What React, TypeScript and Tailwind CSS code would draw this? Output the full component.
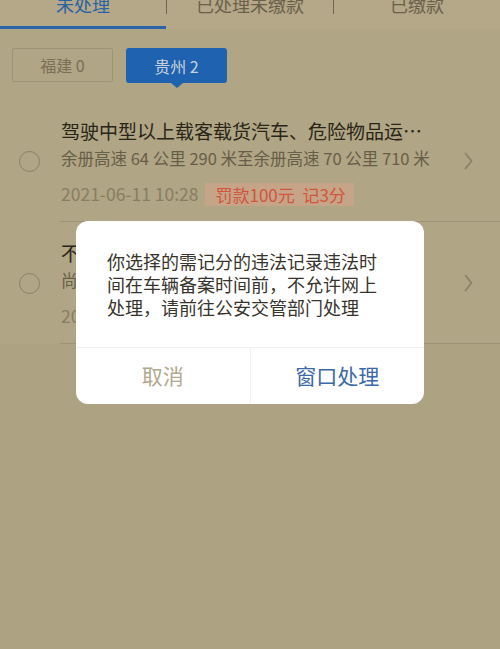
import React from 'react';

const FONT = { fontFamily: '"Noto Sans CJK SC", "Noto Sans", sans-serif' };

interface Record {
  title: string;
  place: string;
  time: string;
  penalty: string;
}

const records: Record[] = [
  {
    title: '驾驶中型以上载客载货汽车、危险物品运…',
    place: '余册高速 64 公里 290 米至余册高速 70 公里 710 米',
    time: '2021-06-11 10:28',
    penalty: '罚款100元  记3分',
  },
  {
    title: '不按规定使用灯光的',
    place: '尚义路与余册高速连接线路口',
    time: '2021-06-09 08:42',
    penalty: '罚款100元  记1分',
  },
];

const Tabs: React.FC = () => {
  const tabs = ['未处理', '已处理未缴款', '已缴款'];
  return (
    <div className="flex -mt-[8px] bg-[#B4A888]">
      {tabs.map((t, i) => (
        <React.Fragment key={t}>
          {i > 0 && <div className="w-px h-[22px] bg-[#6f6650] self-start" />}
          <div className="w-[166px] flex flex-col items-center">
            <div
              className={`h-[24px] leading-[24px] text-[18px] ${
                i === 0 ? 'text-[#2b62a3]' : 'text-[#6a614b]'
              }`}
            >
              {t}
            </div>
            <div className="h-[10px]" />
            <div className={`h-[3px] w-full ${i === 0 ? 'bg-[#2a63a8]' : 'bg-transparent'}`} />
          </div>
        </React.Fragment>
      ))}
    </div>
  );
};

const RecordRow: React.FC<{ r: Record }> = ({ r }) => (
  <div className="flex">
    {/* radio */}
    <div className="w-[60px] flex items-center pl-[19px]">
      <div className="w-[21px] h-[21px] rounded-full border-[1.5px] border-[#8a8068]" />
    </div>
    <div className="flex-1 flex border-b border-[#9c9276]">
      <div className="flex-1 min-w-0 pl-px pt-[17px] pb-[15px]">
        <div className="text-[19px] leading-[28px] text-[#2a2518] whitespace-nowrap overflow-hidden">
          {r.title}
        </div>
        <div className="text-[16.5px] leading-[26px] text-[#675e48] whitespace-nowrap overflow-hidden">
          {r.place}
        </div>
        <div className="flex items-center mt-[12px] h-[23px]">
          <span className="text-[17.5px] text-[#877d63] whitespace-nowrap">{r.time}</span>
          <span className="ml-[7px] h-[23px] flex items-center pl-[10px] pr-[8px] bg-[#C6A487] text-[#D2553D] text-[17px] whitespace-pre">
            {r.penalty}
          </span>
        </div>
      </div>
      <div className="w-[63px] flex items-center pl-[27px]">
        <svg width="9" height="18" viewBox="0 0 9 18" fill="none">
          <path d="M1.5 1.5 L7.5 9 L1.5 16.5" stroke="#8b8168" strokeWidth="1.8" strokeLinecap="round" strokeLinejoin="round" />
        </svg>
      </div>
    </div>
  </div>
);

export default function App() {
  return (
    <div className="relative w-[500px] h-[649px] overflow-hidden bg-[#ADA282]" style={FONT}>
      <div className="bg-[#B0A585]">
        <Tabs />

        {/* province chips */}
        <div className="flex gap-[13px] pl-[12px] mt-[19px]">
          <div className="w-[101px] h-[34px] flex items-center justify-center border border-[#9d9376] rounded-[2px] text-[16px] text-[#7a7057]">
            福建 0
          </div>
          <div className="relative w-[101px] h-[35px] flex items-center justify-center bg-[#1F63B0] rounded-[3px] text-[16px] text-[#C8D2DE]">
            贵州 2
            <div className="absolute left-1/2 -translate-x-1/2 top-full w-0 h-0 border-l-[6px] border-r-[6px] border-t-[5px] border-l-transparent border-r-transparent border-t-[#1F63B0]" />
          </div>
        </div>

        <div className="mt-[17px]">
          {records.map((r) => (
            <RecordRow key={r.time} r={r} />
          ))}
        </div>
      </div>

      {/* dialog */}
      <div className="absolute left-[76px] top-[221px] w-[348px] bg-white rounded-[12px] overflow-hidden">
        <div className="pl-[31px] pr-[31px] pt-[29px] pb-[28px] text-[18px] leading-[23px] text-[#38342c]">
          你选择的需记分的违法记录违法时间在车辆备案时间前，不允许网上处理，请前往公安交管部门处理
        </div>
        <div className="flex h-[57px] border-t border-[#f1f1f1]">
          <button type="button" className="flex-1 flex items-center justify-center text-[21px] text-[#B2A88D]">
            取消
          </button>
          <div className="w-px bg-[#f1f1f1]" />
          <button type="button" className="flex-1 flex items-center justify-center text-[21px] text-[#3C69A7]">
            窗口处理
          </button>
        </div>
      </div>
    </div>
  );
}
